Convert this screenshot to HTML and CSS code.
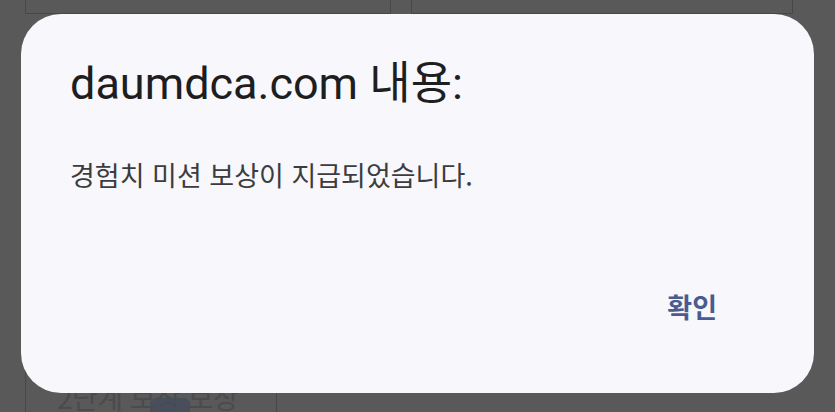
FILE: index.html
```html
<!DOCTYPE html>
<html lang="ko">
<head>
<meta charset="utf-8">
<title>daumdca.com 내용</title>
<link rel="stylesheet" href="styles.css">
</head>
<body>
<div class="page">
  <div class="row top-row">
    <div class="card card-top-left"></div>
    <div class="card card-top-right"></div>
  </div>
  <div class="row bottom-row">
    <div class="card card-bottom">
      <span class="card-label">2단계 보상 보상</span>
      <span class="card-icon"></span>
    </div>
  </div>
</div>
<div class="dialog" role="alertdialog">
  <h1 class="dialog-title">daumdca.com 내용:</h1>
  <p class="dialog-message">경험치 미션 보상이 지급되었습니다.</p>
  <div class="dialog-actions">
    <button class="dialog-button">확인</button>
  </div>
</div>
</body>
</html>
```
FILE: styles.css
```css
html, body {
  margin: 0;
  padding: 0;
}
body {
  width: 835px;
  height: 412px;
  overflow: hidden;
  background: #595959;
  font-family: Roboto, "Noto Sans CJK KR", sans-serif;
  position: relative;
}
.page {
  display: flex;
  flex-direction: column;
  padding: 0 42px 0 25px;
}
.row {
  display: flex;
  gap: 20px;
}
.top-row {
  height: 14px;
}
.card {
  box-sizing: border-box;
  border: 1px solid #474747;
}
.card-top-left {
  width: 366px;
  border-top: none;
}
.card-top-right {
  width: 383px;
  border-top: none;
}
.bottom-row {
  margin-top: 286px;
}
.card-bottom {
  width: 252px;
  height: 112px;
  border-bottom: none;
  display: flex;
  align-items: flex-end;
  padding: 0 0 0 31px;
  position: relative;
}
.card-label {
  font-family: "Noto Sans CJK KR", sans-serif;
  font-size: 28px;
  color: #4b4b4b;
  line-height: 30px;
  margin-bottom: 0;
  letter-spacing: -0.5px;
}
.card-icon {
  position: absolute;
  left: 124px;
  bottom: 0;
  width: 40px;
  height: 14px;
  background: #434c5b;
  border-radius: 6px 6px 0 0;
  opacity: 0.8;
}
.dialog {
  position: absolute;
  left: 21px;
  top: 14px;
  width: 793px;
  height: 379px;
  box-sizing: border-box;
  background: #f7f7fc;
  border-radius: 40px;
  padding: 40px 49px 0 49px;
  display: flex;
  flex-direction: column;
}
.dialog-title {
  margin: 0;
  font-family: Roboto, "Noto Sans CJK KR", sans-serif;
  font-weight: 400;
  font-size: 45px;
  line-height: 60px;
  color: #1e1e20;
}
.dialog-message {
  margin: 42px 0 0 0;
  font-family: "Noto Sans CJK KR", sans-serif;
  font-size: 27px;
  line-height: 38px;
  color: #3c3c3e;
}
.dialog-actions {
  display: flex;
  justify-content: flex-end;
  margin-top: 94px;
  padding-right: 48px;
}
.dialog-button {
  border: none;
  background: none;
  padding: 0;
  font-family: "Noto Sans CJK KR", sans-serif;
  font-size: 27px;
  font-weight: 700;
  line-height: 38px;
  color: #4a5c8f;
}
```
